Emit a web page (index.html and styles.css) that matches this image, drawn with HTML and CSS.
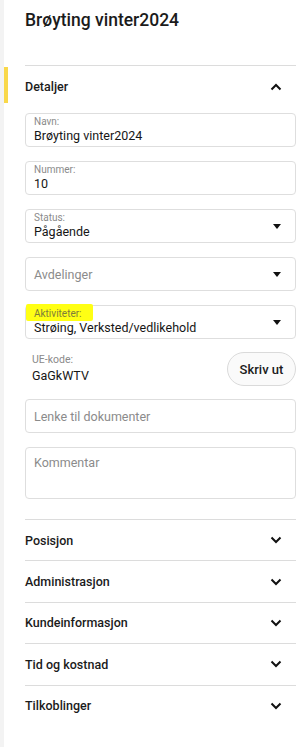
FILE: index.html
```html
<!DOCTYPE html>
<html lang="no">
<head>
  <meta charset="UTF-8" />
  <meta name="viewport" content="width=device-width, initial-scale=1.0" />
  <title>Brøyting vinter2024</title>
  <link rel="stylesheet" href="styles.css">
</head>
<body>
  <div class="panel">
    <h1 class="title">Brøyting vinter2024</h1>

    <section class="group open">
      <div class="group-head">
        <span>Detaljer</span>
        <svg class="chev" viewBox="0 0 12 8" width="12" height="8"><path d="M1.5 6.5 6 2l4.5 4.5" /></svg>
      </div>

      <div class="fields">
        <div class="field">
          <span class="label">Navn:</span>
          <span class="value">Brøyting vinter2024</span>
        </div>
        <div class="field">
          <span class="label">Nummer:</span>
          <span class="value">10</span>
        </div>
        <div class="field select">
          <span class="label">Status:</span>
          <span class="value">Pågående</span>
          <span class="caret"></span>
        </div>
        <div class="field select empty">
          <span class="placeholder">Avdelinger</span>
          <span class="caret"></span>
        </div>
        <div class="field select">
          <span class="label marked">Aktiviteter:</span>
          <span class="value">Strøing, Verksted/vedlikehold</span>
          <span class="caret"></span>
        </div>

        <div class="code-row">
          <div class="code">
            <span class="label">UE-kode:</span>
            <span class="value">GaGkWTV</span>
          </div>
          <button class="print">Skriv ut</button>
        </div>

        <div class="field empty">
          <span class="placeholder">Lenke til dokumenter</span>
        </div>
        <div class="field textarea">
          <span class="placeholder">Kommentar</span>
        </div>
      </div>
    </section>

    <section class="group">
      <div class="group-head">
        <span>Posisjon</span>
        <svg class="chev" viewBox="0 0 12 8" width="12" height="8"><path d="M1.5 1.5 6 6l4.5-4.5" /></svg>
      </div>
    </section>
    <section class="group">
      <div class="group-head">
        <span>Administrasjon</span>
        <svg class="chev" viewBox="0 0 12 8" width="12" height="8"><path d="M1.5 1.5 6 6l4.5-4.5" /></svg>
      </div>
    </section>
    <section class="group">
      <div class="group-head">
        <span>Kundeinformasjon</span>
        <svg class="chev" viewBox="0 0 12 8" width="12" height="8"><path d="M1.5 1.5 6 6l4.5-4.5" /></svg>
      </div>
    </section>
    <section class="group">
      <div class="group-head">
        <span>Tid og kostnad</span>
        <svg class="chev" viewBox="0 0 12 8" width="12" height="8"><path d="M1.5 1.5 6 6l4.5-4.5" /></svg>
      </div>
    </section>
    <section class="group last">
      <div class="group-head">
        <span>Tilkoblinger</span>
        <svg class="chev" viewBox="0 0 12 8" width="12" height="8"><path d="M1.5 1.5 6 6l4.5-4.5" /></svg>
      </div>
    </section>
  </div>
</body>
</html>
```

FILE: styles.css
```css
* {
  margin: 0;
  padding: 0;
  box-sizing: border-box;
  font-family: Roboto, "Noto Sans", sans-serif;
}
body {
  background: #fff;
  color: #1b1b1b;
}
.panel {
  min-height: 747px;
  border-left: 4px solid #f3f3f3;
  padding: 0 12px 0 21px;
}
.title {
  font-size: 17.5px;
  font-weight: 500;
  line-height: 22px;
  padding-top: 9px;
  height: 65px;
}
.group {
  position: relative;
  border-top: 1px solid #dcdcdc;
}
.group.open::before {
  /* current section marker */
  content: "";
  position: absolute;
  left: -21px;
  top: 1px;
  width: 4px;
  height: 36px;
  background: #f9d84a;
}
.group-head {
  display: flex;
  align-items: center;
  justify-content: space-between;
  height: 40.4px;
  font-size: 12.5px;
  font-weight: 500;
}
.open .group-head {
  height: 41px;
}
.chev {
  margin-right: 14px;
  fill: none;
  stroke: #111;
  stroke-width: 2;
}
.fields {
  display: flex;
  flex-direction: column;
  gap: 14px;
  padding: 6px 0 20px;
}
.field {
  position: relative;
  display: flex;
  flex-direction: column;
  justify-content: center;
  height: 34px;
  padding: 0 24px 0 8px;
  border: 1px solid #dedede;
  border-radius: 4px;
  background: #fff;
}
.label {
  position: relative;
  font-size: 10px;
  line-height: 12px;
  color: #8a8a8a;
}
.value {
  font-size: 12.5px;
  line-height: 16px;
  color: #161616;
}
.placeholder {
  font-size: 12.5px;
  color: #8b8b8b;
}
.marked::before {
  content: "";
  position: absolute;
  left: -8px;
  top: -4px;
  width: 67px;
  height: 17px;
  background: #ffff14;
  border-radius: 2px;
  z-index: -1;
}
.marked {
  z-index: 0;
  color: #7d7d3a;
}
.caret {
  position: absolute;
  right: 14px;
  top: 50%;
  margin-top: -2px;
  border-left: 4px solid transparent;
  border-right: 4px solid transparent;
  border-top: 5px solid #111;
}
.textarea {
  height: 52px;
  justify-content: flex-start;
  padding-top: 7px;
}
.code-row {
  display: flex;
  align-items: center;
  justify-content: space-between;
  margin-top: -1px;
  margin-bottom: -1px;
}
.code {
  display: flex;
  flex-direction: column;
  gap: 2px;
  padding-left: 7px;
}
.code .label {
  font-size: 10.5px;
}
.print {
  width: 69px;
  height: 34px;
  border: 1px solid #dadada;
  border-radius: 17px;
  background: #fafafa;
  font-size: 13px;
  font-weight: 500;
  color: #1b1b1b;
}
.last {
  height: 50px;
}
```
